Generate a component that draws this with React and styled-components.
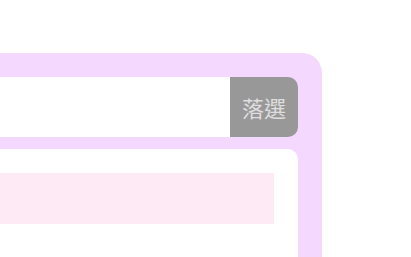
import React from "react";
import styled, { createGlobalStyle } from "styled-components";

const Global = createGlobalStyle`
  html, body { margin: 0; padding: 0; background: #ffffff; overflow: hidden; }
  body { font-family: "Noto Sans CJK TC", "Noto Sans", sans-serif; }
`;

const Page = styled.div`
  padding-top: 53px;
  width: 411px;
  height: 257px;
  box-sizing: border-box;
  overflow: hidden;
`;

const Frame = styled.div`
  margin-left: -200px;
  width: 522px;
  box-sizing: border-box;
  padding: 24px;
  background: #f4d8fd;
  border-radius: 0 20px 0 0;
  display: flex;
  flex-direction: column;
  gap: 12px;
`;

const SearchRow = styled.div`
  display: flex;
  height: 60px;
`;

const Field = styled.input`
  flex: 1;
  min-width: 0;
  border: none;
  outline: none;
  background: #ffffff;
  border-radius: 10px 0 0 10px;
  padding: 0 12px;
  font-size: 18px;
`;

const Button = styled.button`
  width: 68px;
  border: none;
  padding: 0;
  background: #999899;
  color: #dedede;
  border-radius: 0 10px 10px 0;
  font-family: "Noto Sans CJK TC", sans-serif;
  font-size: 22px;
  display: flex;
  align-items: center;
  justify-content: center;
`;

const Card = styled.div`
  background: #ffffff;
  border-radius: 10px 10px 0 0;
  padding: 24px;
  height: 200px;
`;

const Bar = styled.div`
  height: 51px;
  background: #fdeaf4;
`;

export default function App() {
  return (
    <Page>
      <Global />
      <Frame>
        <SearchRow>
          <Field />
          <Button>落選</Button>
        </SearchRow>
        <Card>
          <Bar />
        </Card>
      </Frame>
    </Page>
  );
}
